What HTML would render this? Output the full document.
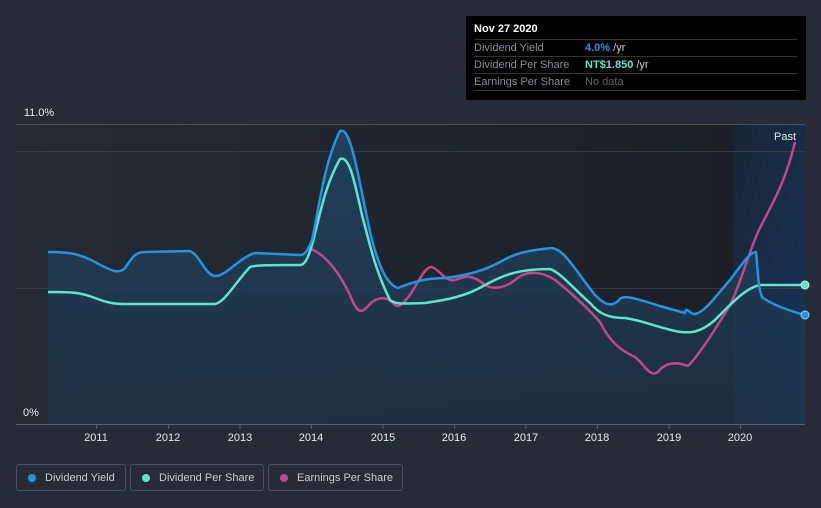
<!DOCTYPE html>
<html><head><meta charset="utf-8"><style>
body{margin:0;width:821px;height:508px;background:#262b37;font-family:"Liberation Sans",sans-serif;overflow:hidden;position:relative}
.tt{position:absolute;left:466px;top:16px;width:340px;height:84px;background:#000}
.tt .h{position:absolute;left:8px;top:7px;color:#fff;font-weight:bold;font-size:11px}
.row{position:absolute;left:8px;width:324px;height:16px;border-top:1px solid #333;font-size:11px;color:#8a8f98;line-height:16px}
.row span{position:absolute;left:111px}
.leg{position:absolute;top:464px;height:27px;border:1px solid #4a505c;border-radius:3px;color:#c8ccd2;font-size:11px;line-height:26px;box-sizing:border-box}
.leg i{position:absolute;left:11px;top:9px;width:8px;height:8px;border-radius:50%}
.leg b{font-weight:normal;position:absolute;left:28px}
</style></head><body>
<svg width="821" height="508" style="position:absolute;left:0;top:0">
<defs>
<linearGradient id="bg" x1="0" x2="1"><stop offset="0" stop-color="#252a35"/><stop offset="1" stop-color="#1b1e25"/></linearGradient>
<linearGradient id="ar" x1="0" y1="0" x2="0" y2="1"><stop offset="0" stop-color="#1f4462" stop-opacity=".9"/><stop offset="1" stop-color="#1f3348" stop-opacity=".7"/></linearGradient>
<linearGradient id="pa" x1="0" y1="0" x2="1" y2="1"><stop offset="0" stop-color="#17263a"/><stop offset="1" stop-color="#173a66"/></linearGradient>
</defs>
<rect x="16" y="124" width="789" height="300" fill="url(#bg)"/>
<rect x="733" y="124" width="72" height="300" fill="url(#pa)" opacity=".8"/>
<line x1="16" y1="124.5" x2="805" y2="124.5" stroke="#4a505c"/>
<line x1="16" y1="151.5" x2="805" y2="151.5" stroke="#363c48"/>
<line x1="16" y1="288.5" x2="805" y2="288.5" stroke="#363c48"/>
<path d="M48,252 C70,252 80,254 95,262 C110,270 118,275 125,268 C132,258 135,252 145,252 L190,251 C200,255 205,275 215,276 C225,277 240,257 255,253 L300,255 C305,255 308,250 312,240 C318,215 323,165 340,131 C352,125 360,190 372,240 C380,270 388,285 398,288 C410,283 425,278 445,278 C470,275 485,270 500,262 C515,253 530,250 552,248 C565,250 575,270 595,295 C605,305 612,308 620,299 C624,294 640,300 660,306 L685,313 C686,305 690,315 695,314 C705,312 715,297 730,280 C742,264 750,252 756,252 C758,270 758,292 763,298 C775,306 790,311 805,315 L805,424 L48,424 Z" fill="url(#ar)"/>
<g fill="none" stroke-width="2.5" stroke-linejoin="round">
<path d="M311,249 C325,255 338,270 350,295 C356,310 360,316 368,306 C376,297 385,296 392,302 C398,310 402,305 410,295 C418,283 425,266 432,267 C440,270 445,282 455,280 C465,276 472,274 485,285 C493,290 505,288 515,280 C525,271 540,270 555,280 C570,292 585,305 600,322 C610,342 620,350 635,357 C645,365 650,378 658,372 C665,363 675,361 688,366 C698,356 715,330 730,305 C740,285 748,255 758,232 C770,207 785,185 795,142" stroke="#c2468a"/>
<path d="M48,292 C70,292 80,292 95,298 C108,303 115,304 125,304 L215,304 C225,302 235,283 250,267 C255,265 270,265 300,265 C305,265 308,258 312,245 C320,215 325,185 340,159 C350,155 355,185 362,215 C370,245 375,270 390,300 C395,304 400,304 425,303 C445,300 465,297 485,285 C500,277 515,269 550,269 C560,272 575,290 590,303 C600,315 610,318 625,318 C640,320 650,325 675,331 C690,334 700,333 715,320 C730,305 745,288 760,285 L805,285" stroke="#5ce6cd"/>
<path d="M48,252 C70,252 80,254 95,262 C110,270 118,275 125,268 C132,258 135,252 145,252 L190,251 C200,255 205,275 215,276 C225,277 240,257 255,253 L300,255 C305,255 308,250 312,240 C318,215 323,165 340,131 C352,125 360,190 372,240 C380,270 388,285 398,288 C410,283 425,278 445,278 C470,275 485,270 500,262 C515,253 530,250 552,248 C565,250 575,270 595,295 C605,305 612,308 620,299 C624,294 640,300 660,306 L685,313 C686,305 690,315 695,314 C705,312 715,297 730,280 C742,264 750,252 756,252 C758,270 758,292 763,298 C775,306 790,311 805,315" stroke="#2394e0"/>
</g>
<circle cx="805" cy="285" r="4" fill="#5ce6cd" stroke="#b8f5ea" stroke-width="1"/>
<circle cx="805" cy="315" r="4" fill="#2394e0" stroke="#9dd0f5" stroke-width="1"/>
<line x1="16" y1="424.5" x2="805" y2="424.5" stroke="#5a606c"/>
<g stroke="#5a606c"><line x1="96.5" y1="424" x2="96.5" y2="429"/><line x1="168.5" y1="424" x2="168.5" y2="429"/><line x1="240" y1="424" x2="240" y2="429"/><line x1="311.5" y1="424" x2="311.5" y2="429"/><line x1="383" y1="424" x2="383" y2="429"/><line x1="454.5" y1="424" x2="454.5" y2="429"/><line x1="526" y1="424" x2="526" y2="429"/><line x1="597.5" y1="424" x2="597.5" y2="429"/><line x1="669" y1="424" x2="669" y2="429"/><line x1="740.5" y1="424" x2="740.5" y2="429"/></g>
<g fill="#e6e8ec" font-size="11" text-anchor="middle" font-family="Liberation Sans,sans-serif">
<text x="96" y="441">2011</text><text x="168" y="441">2012</text><text x="240" y="441">2013</text><text x="311" y="441">2014</text><text x="383" y="441">2015</text><text x="454" y="441">2016</text><text x="526" y="441">2017</text><text x="597" y="441">2018</text><text x="669" y="441">2019</text><text x="740" y="441">2020</text>
<text x="39" y="116">11.0%</text><text x="31" y="416">0%</text><text x="785" y="140">Past</text>
</g>
</svg>
<div class="tt"><div class="h">Nov 27 2020</div>
<div class="row" style="top:23px">Dividend Yield<span><em style="font-style:normal;color:#2394e0;font-weight:bold">4.0%</em> <em style="font-style:normal;color:#ccc">/yr</em></span></div>
<div class="row" style="top:40px">Dividend Per Share<span><em style="font-style:normal;color:#5ce6cd;font-weight:bold">NT$1.850</em> <em style="font-style:normal;color:#ccc">/yr</em></span></div>
<div class="row" style="top:57px;border-bottom:1px solid #333">Earnings Per Share<span style="color:#666">No data</span></div>
</div>
<div class="leg" style="left:16px;width:110px"><i style="background:#2394e0"></i><b>Dividend Yield</b></div>
<div class="leg" style="left:130px;width:134px"><i style="background:#5ce6cd"></i><b>Dividend Per Share</b></div>
<div class="leg" style="left:268px;width:135px"><i style="background:#c2468a"></i><b>Earnings Per Share</b></div>
</body></html>
